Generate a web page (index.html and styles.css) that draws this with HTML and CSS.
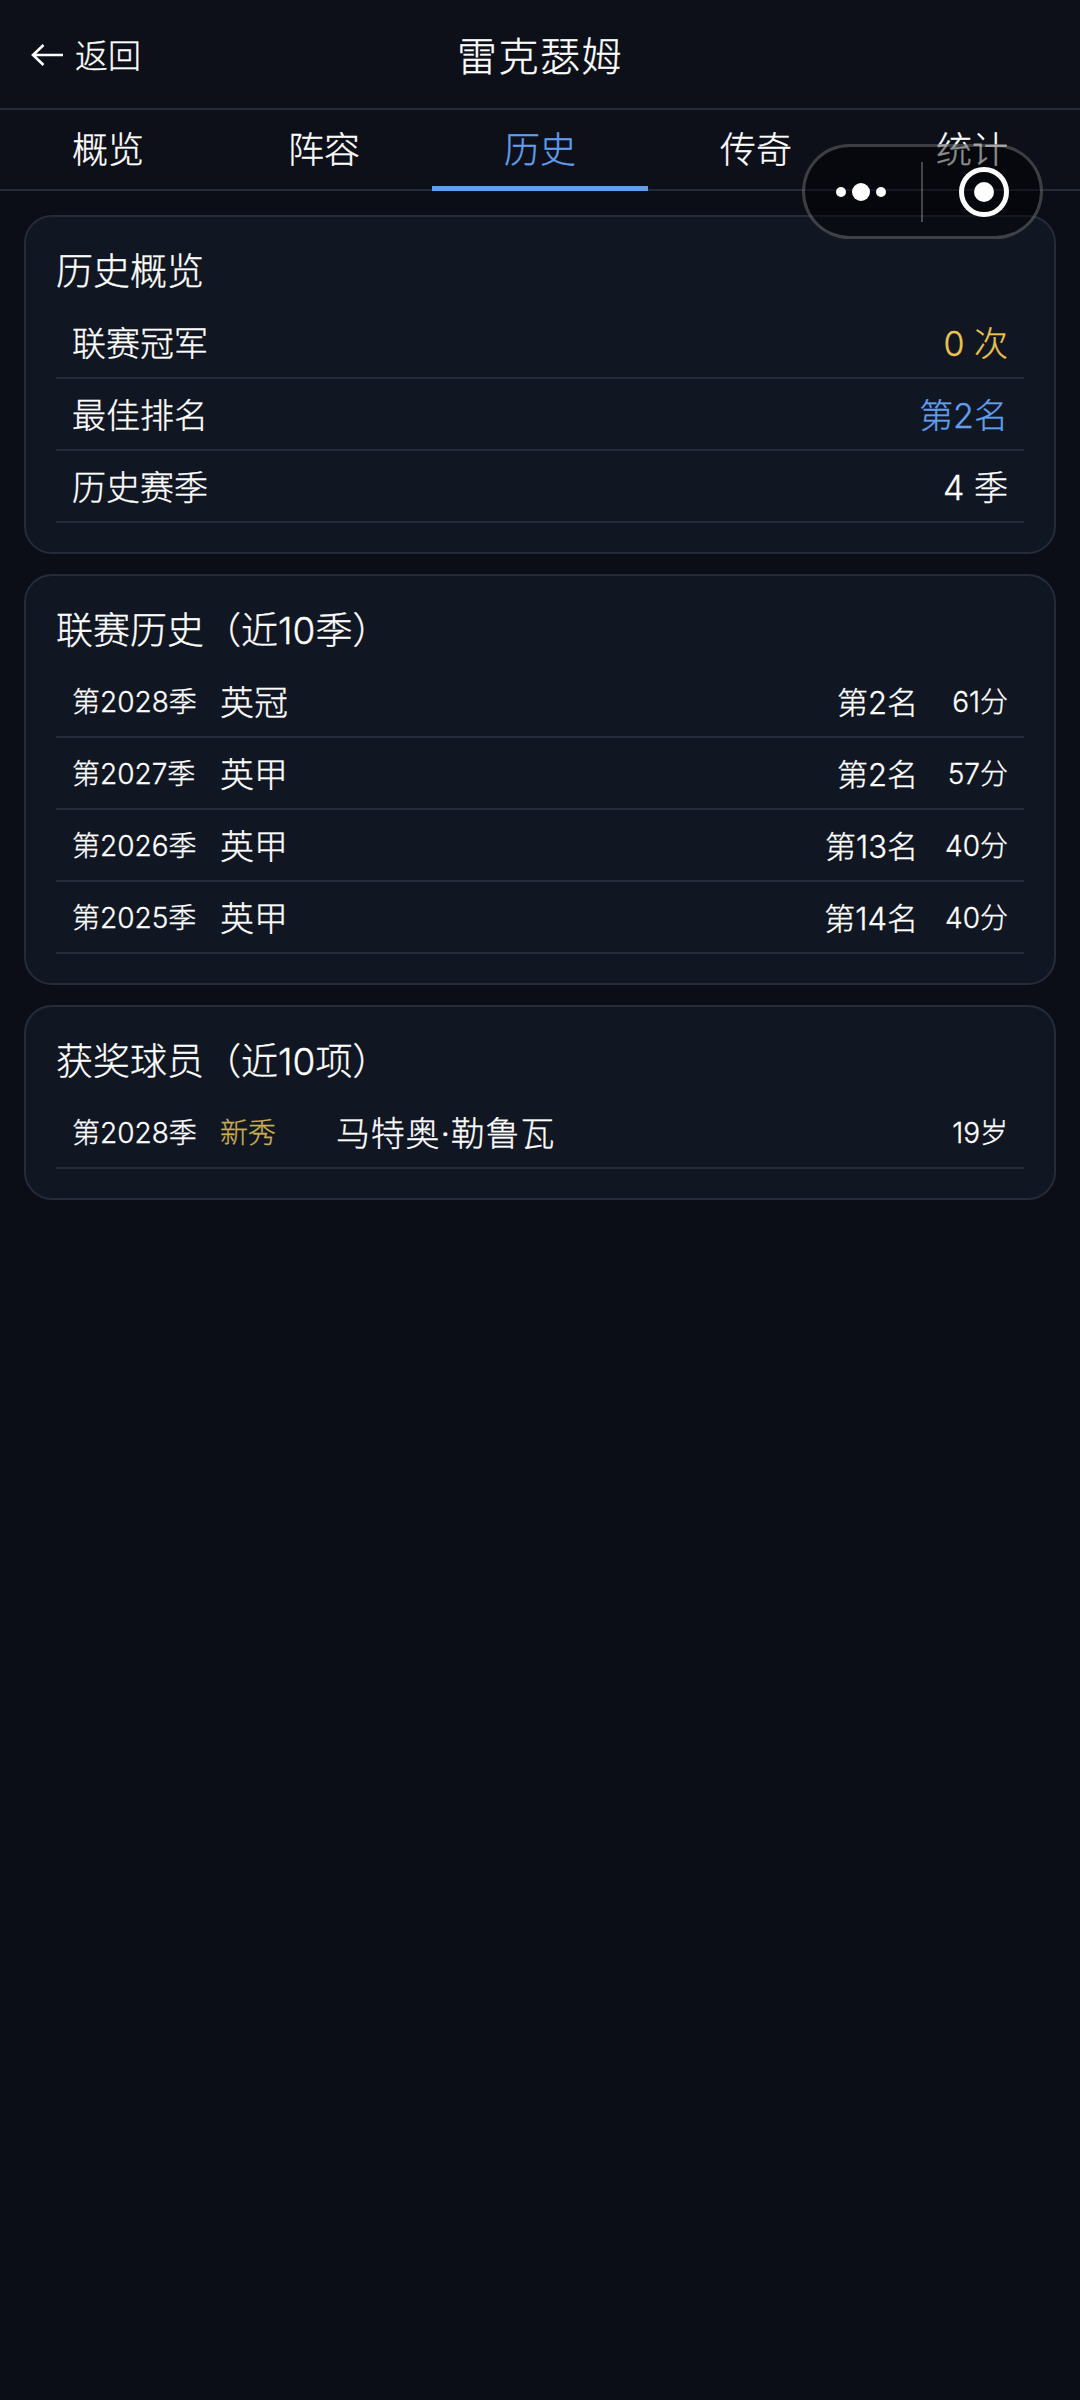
FILE: index.html
```html
<!DOCTYPE html>
<html lang="zh-CN">
<head>
    <meta charset="UTF-8">
    <title>雷克瑟姆</title>
    <link rel="stylesheet" href="styles.css">
</head>
<body>

<header class="topbar">
    <div class="back">
        <svg class="back-arrow" width="32" height="26" viewBox="0 0 32 26">
            <path d="M12.5 3 L2 13 L12.5 23 M2 13 H32" fill="none" stroke="#fff" stroke-width="2.6"/>
        </svg>
        <span>返回</span>
    </div>
    <div class="team-name">雷克瑟姆</div>
    <div></div>
</header>

<nav class="tabs">
    <div class="tab">概览</div>
    <div class="tab">阵容</div>
    <div class="tab active">历史</div>
    <div class="tab">传奇</div>
    <div class="tab">统计</div>
</nav>

<main class="content">
    <section class="card">
        <h2 class="card-title">历史概览</h2>
        <div class="row"><span class="label">联赛冠军</span><span class="value gold">0 次</span></div>
        <div class="row"><span class="label">最佳排名</span><span class="value blue">第2名</span></div>
        <div class="row"><span class="label">历史赛季</span><span class="value">4 季</span></div>
    </section>

    <section class="card">
        <h2 class="card-title">联赛历史（近10季）</h2>
        <div class="row">
            <span class="season">第2028季</span><span class="league">英冠</span>
            <span class="rank">第2名</span><span class="points">61分</span>
        </div>
        <div class="row">
            <span class="season">第2027季</span><span class="league">英甲</span>
            <span class="rank">第2名</span><span class="points">57分</span>
        </div>
        <div class="row">
            <span class="season">第2026季</span><span class="league">英甲</span>
            <span class="rank">第13名</span><span class="points">40分</span>
        </div>
        <div class="row">
            <span class="season">第2025季</span><span class="league">英甲</span>
            <span class="rank">第14名</span><span class="points">40分</span>
        </div>
    </section>

    <section class="card">
        <h2 class="card-title">获奖球员（近10项）</h2>
        <div class="row">
            <span class="season">第2028季</span><span class="award">新秀</span>
            <span class="player">马特奥·勒鲁瓦</span><span class="points">19岁</span>
        </div>
    </section>
</main>

<!-- mini program capsule, sits over the tabs -->
<div class="capsule">
    <svg class="capsule-dots" width="50" height="20" viewBox="0 0 50 20">
        <circle cx="5" cy="10" r="5" fill="#fff"/>
        <circle cx="25" cy="10" r="9" fill="#fff"/>
        <circle cx="45" cy="10" r="5" fill="#fff"/>
    </svg>
    <div class="capsule-line"></div>
    <svg class="capsule-ring" width="52" height="52" viewBox="0 0 52 52">
        <circle cx="26" cy="26" r="22.5" fill="none" stroke="#fff" stroke-width="5"/>
        <circle cx="26" cy="26" r="10" fill="#fff"/>
    </svg>
</div>

</body>
</html>
```

FILE: styles.css
```css
* {
    box-sizing: border-box;
}
body {
    margin: 0;
    min-height: 2400px;
    background-color: #0b0e16;
    color: #fff;
    font-family: Inter, "Noto Sans CJK SC", sans-serif;
    font-weight: 300;
    -webkit-text-stroke: 0.3px;
    position: relative;
}
.topbar {
    display: grid;
    grid-template-columns: 1fr auto 1fr;
    align-items: center;
    height: 110px;
    padding: 0 31px;
    background-color: #0d1019;
    border-bottom: 2px solid #262b3a;
}
.back {
    display: flex;
    align-items: center;
    gap: 12px;
    font-size: 33px;
}
.back-arrow {
    margin-top: 2px;
}
.team-name {
    font-size: 40px;
    letter-spacing: 1.5px;
}
.tabs {
    display: flex;
    height: 81px;
    background-color: #0d1019;
    border-bottom: 2px solid #262b3a;
}
.tab {
    flex: 1;
    height: 81px;
    line-height: 80px;
    text-align: center;
    font-size: 36px;
}
.tab.active {
    color: #619fec;
    border-bottom: 5px solid #619fec;
}
.content {
    display: flex;
    flex-direction: column;
    gap: 20px;
    padding: 24px 24px 0;
}
.card {
    padding: 31px 30px 29px;
    background-color: #111722;
    border: 2px solid #252b3a;
    border-radius: 28px;
}
.card-title {
    margin: 0 0 11px;
    font-size: 37px;
    font-weight: 300;
    line-height: 48px;
}
.row {
    display: flex;
    align-items: center;
    height: 72px;
    padding: 0 16px 2px;
    border-bottom: 2px solid #252b3a;
    font-size: 34px;
}
.label {
    flex: 1;
}
.value.gold {
    color: #edc44f;
}
.value.blue {
    color: #619fec;
}
.season {
    width: 148px;
    font-size: 28px;
}
.league {
    font-size: 34px;
}
.rank {
    margin-left: auto;
    font-size: 31px;
}
.points {
    width: 90px;
    text-align: right;
    font-size: 28px;
}
.award {
    width: 116px;
    font-size: 28px;
    color: #c9ae55;
}
.player {
    flex: 1;
    letter-spacing: 0.8px;
}
.capsule {
    position: absolute;
    top: 144px;
    left: 802px;
    width: 241px;
    height: 95px;
    display: flex;
    align-items: center;
    background-color: rgba(0, 0, 0, 0.45);
    border: 3px solid rgba(255, 255, 255, 0.22);
    border-radius: 48px;
}
.capsule-dots {
    margin-left: 31px;
}
.capsule-line {
    width: 2px;
    height: 60px;
    margin-left: 35px;
    background-color: rgba(255, 255, 255, 0.25);
}
.capsule-ring {
    margin-left: 35px;
}
```
